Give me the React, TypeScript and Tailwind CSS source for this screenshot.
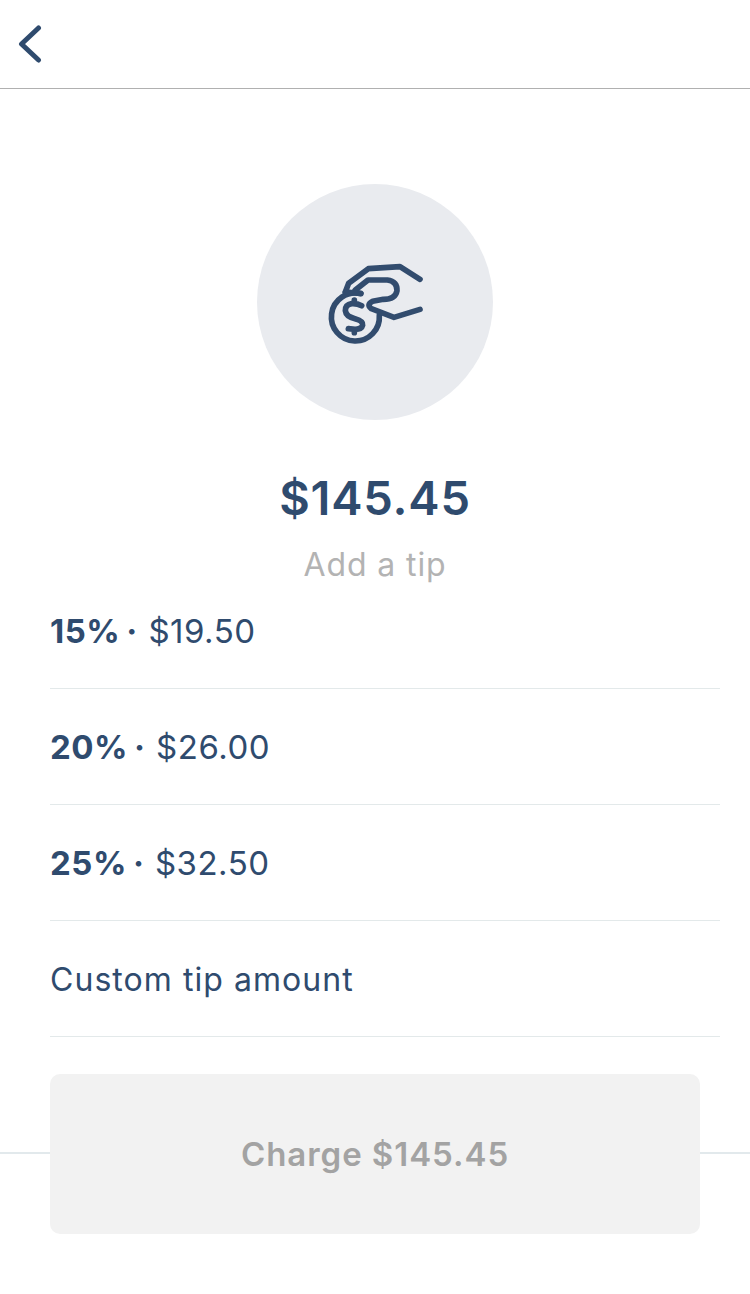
const tips = [
  { percent: '15%', amount: '$19.50' },
  { percent: '20%', amount: '$26.00' },
  { percent: '25%', amount: '$32.50' },
];

const BackIcon = () => (
  <svg width="24" height="42" viewBox="0 0 24 42" fill="none" stroke="#2f4b6e" strokeWidth="5" strokeLinecap="round" strokeLinejoin="round">
    <path d="M20.5 5 L3.5 21 L20.5 37" />
  </svg>
);

const TipIcon = () => (
  <svg
    width="150"
    height="120"
    viewBox="0 6 450 360"
    fill="none"
    stroke="#324c6e"
    strokeWidth="17"
    strokeLinecap="round"
    strokeLinejoin="round"
  >
    <path d="M183 161 A72 72 0 1 0 238 226" />
    <path d="M360 118 L300 80 L205 86 L146 130 L136 156" />
    <path d="M136 156 L182 160 M166 150 L204 120 H262 Q292 124 291 152 Q286 178 250 178 L218 184 Q198 194 214 206 L282 232 L360 208" />
    <path d="M185 197 Q172 190 155 191 Q136 194 136 212 Q138 230 165 236 Q190 243 188 255 Q185 268 165 268 L145 266 M163 180 V190 M163 268 V278" />
  </svg>
);

export default function App() {
  return (
    <div className="w-[750px] h-[1294px] bg-white overflow-hidden font-['Inter','Liberation_Sans',sans-serif] text-[#2f4b6e]">
      <header className="h-[89px] border-b border-[#b0b0b0] flex items-center pl-[18px] pb-[1px]">
        <BackIcon />
      </header>

      <div className="flex flex-col items-center pt-[95px]">
        <div className="w-[236px] h-[236px] rounded-full bg-[#e9ebef] flex items-center justify-center">
          <TipIcon />
        </div>
        <h1 className="mt-[49px] text-[47px] leading-[58px] font-semibold tracking-[0.8px]">$145.45</h1>
        <p className="mt-[18px] text-[32px] leading-[40px] tracking-[0.9px] text-[#b3b3b3]">Add a tip</p>
      </div>

      <div className="ml-[50px] mr-[30px] mt-[-12px]">
        {tips.map((tip) => (
          <div key={tip.percent} className="h-[116px] border-b border-[#e3e9ea] flex items-center text-[33px] pt-[3px]">
            <span className="font-bold tracking-[0.5px]">{tip.percent}</span>
            <span className="ml-[6px] mr-[11px] font-bold">·</span>
            <span className="tracking-[0.5px]">{tip.amount}</span>
          </div>
        ))}
        <div className="h-[116px] border-b border-[#e3e9ea] flex items-center text-[32px] tracking-[1.05px] pt-[3px]">
          Custom tip amount
        </div>
      </div>

      <div className="relative mt-[37px] px-[50px]">
        <div className="absolute left-0 right-0 top-[78px] h-[2px] bg-[#e2e9ec]" />
        <button className="relative w-[650px] h-[160px] rounded-[10px] bg-[#f2f2f2] text-[#a3a3a3] text-[33px] font-semibold tracking-[0.95px] flex items-center justify-center pt-[1px]">
          Charge $145.45
        </button>
      </div>
    </div>
  );
}
